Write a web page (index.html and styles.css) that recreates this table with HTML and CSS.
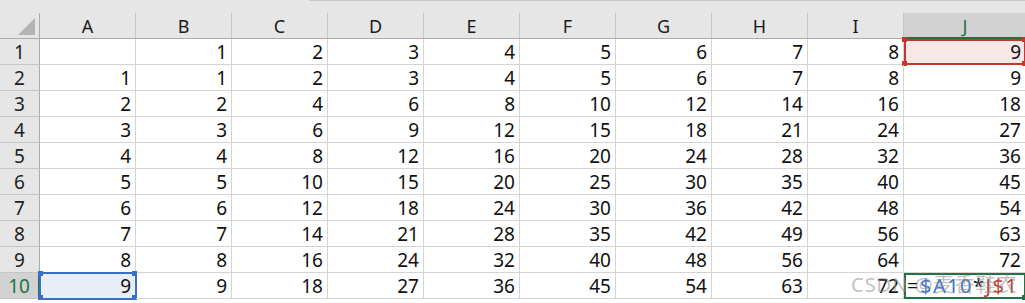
FILE: index.html
```html
<!DOCTYPE html>
<html>
<head>
<meta charset="utf-8">
<link rel="stylesheet" href="styles.css">
</head>
<body>
<div class="sheet">
  <div class="topstrip"><div class="topline"></div></div>
  <div class="grid" id="grid">
    <div class="corner"><div class="tri"></div></div>
    <div class="colh">A</div><div class="colh">B</div><div class="colh">C</div><div class="colh">D</div><div class="colh">E</div><div class="colh">F</div><div class="colh">G</div><div class="colh">H</div><div class="colh">I</div><div class="colh sel">J</div>

    <div class="rowh">1</div><div class="c"></div><div class="c">1</div><div class="c">2</div><div class="c">3</div><div class="c">4</div><div class="c">5</div><div class="c">6</div><div class="c">7</div><div class="c">8</div><div class="c red">9<i class="h tl r"></i><i class="h tr r"></i><i class="h bl r"></i><i class="h br r"></i></div>
    <div class="rowh">2</div><div class="c">1</div><div class="c">1</div><div class="c">2</div><div class="c">3</div><div class="c">4</div><div class="c">5</div><div class="c">6</div><div class="c">7</div><div class="c">8</div><div class="c">9</div>
    <div class="rowh">3</div><div class="c">2</div><div class="c">2</div><div class="c">4</div><div class="c">6</div><div class="c">8</div><div class="c">10</div><div class="c">12</div><div class="c">14</div><div class="c">16</div><div class="c">18</div>
    <div class="rowh">4</div><div class="c">3</div><div class="c">3</div><div class="c">6</div><div class="c">9</div><div class="c">12</div><div class="c">15</div><div class="c">18</div><div class="c">21</div><div class="c">24</div><div class="c">27</div>
    <div class="rowh">5</div><div class="c">4</div><div class="c">4</div><div class="c">8</div><div class="c">12</div><div class="c">16</div><div class="c">20</div><div class="c">24</div><div class="c">28</div><div class="c">32</div><div class="c">36</div>
    <div class="rowh">6</div><div class="c">5</div><div class="c">5</div><div class="c">10</div><div class="c">15</div><div class="c">20</div><div class="c">25</div><div class="c">30</div><div class="c">35</div><div class="c">40</div><div class="c">45</div>
    <div class="rowh">7</div><div class="c">6</div><div class="c">6</div><div class="c">12</div><div class="c">18</div><div class="c">24</div><div class="c">30</div><div class="c">36</div><div class="c">42</div><div class="c">48</div><div class="c">54</div>
    <div class="rowh">8</div><div class="c">7</div><div class="c">7</div><div class="c">14</div><div class="c">21</div><div class="c">28</div><div class="c">35</div><div class="c">42</div><div class="c">49</div><div class="c">56</div><div class="c">63</div>
    <div class="rowh">9</div><div class="c">8</div><div class="c">8</div><div class="c">16</div><div class="c">24</div><div class="c">32</div><div class="c">40</div><div class="c">48</div><div class="c">56</div><div class="c">64</div><div class="c">72</div>
    <div class="rowh sel">10</div><div class="c blue">9<i class="h tl b"></i><i class="h tr b"></i><i class="h bl b"></i><i class="h br b"></i></div><div class="c">9</div><div class="c">18</div><div class="c">27</div><div class="c">36</div><div class="c">45</div><div class="c">54</div><div class="c">63</div><div class="c">72</div><div class="c edit"><span class="f">=<span class="fa">$A10</span>*<span class="fb">J$1</span></span><i class="h br g"></i></div>
  </div>
  <div class="wm">CSDN @麦香鞋农</div>
</div>
</body>
</html>
```
FILE: styles.css
```css
* { box-sizing: border-box; }
html, body { margin: 0; padding: 0; background: #fff; }
body { width: 1025px; height: 303px; overflow: hidden; font-family: "Noto Sans", "Noto Sans CJK SC", sans-serif; }
.sheet { position: relative; }
.topstrip { height: 13px; background: #e6e6e6; }
.topline { margin-left: 309px; border-top: 1px solid #c8c8c8; height: 0; }
.grid {
  display: grid;
  grid-template-columns: 40px repeat(9, 96px) 122px;
  grid-template-rows: 26px repeat(10, 26px);
}
.corner { background: #e6e6e6; border-right: 1px solid #ababab; border-bottom: 1px solid #ababab; position: relative; }
.tri { position: absolute; right: 4px; bottom: 3px; width: 0; height: 0; border-left: 17px solid transparent; border-bottom: 17px solid #b4b4b4; }
.colh {
  background: #e6e6e6; border-right: 1px solid #c6c6c6; border-bottom: 1px solid #ababab;
  text-align: center; font-size: 18px; line-height: 26px; color: #1a1a1a;
}
.colh.sel { background: #d2d2d2; color: #217346; border-bottom: 2px solid #217346; border-right: none; }
.rowh {
  background: #e6e6e6; border-right: 1px solid #ababab; border-bottom: 1px solid #c6c6c6;
  text-align: center; font-size: 19px; line-height: 26px; color: #222;
}
.rowh.sel { background: #d2d2d2; color: #217346; border-right: 2px solid #217346; }
.c {
  border-right: 1px solid #d4d4d4; border-bottom: 1px solid #d4d4d4;
  text-align: right; padding-right: 4px; font-size: 19px; line-height: 26px; color: #111;
  position: relative;
}
.c.red { background: #f8e7e7; outline: 2px solid #c0392b; outline-offset: -2px; }
.c.blue { background: #e8eef8; outline: 2px solid #3a6fc4; outline-offset: -1px; }
.c.edit { outline: 2px solid #217346; outline-offset: -2px; text-align: left; padding-left: 3px; }
.f { color: #111; position: relative; z-index: 2; font-size: 20px; letter-spacing: 1.5px; }
.fa { color: #3a73cf; }
.fb { color: #c0392b; }
.h { position: absolute; width: 5px; height: 5px; display: block; }
.h.tl { left: -2px; top: -2px; }
.h.tr { right: -2px; top: -2px; }
.h.bl { left: -2px; bottom: -2px; }
.h.br { right: -2px; bottom: -2px; }
.h.r { background: #c0392b; }
.h.b { background: #3a6fc4; }
.h.g { background: #217346; }
.wm {
  position: absolute; left: 851px; top: 272px; font-size: 20px; line-height: 26px; letter-spacing: 1px;
  color: rgba(140,140,140,0.55); white-space: nowrap; z-index: 3;
}
```
